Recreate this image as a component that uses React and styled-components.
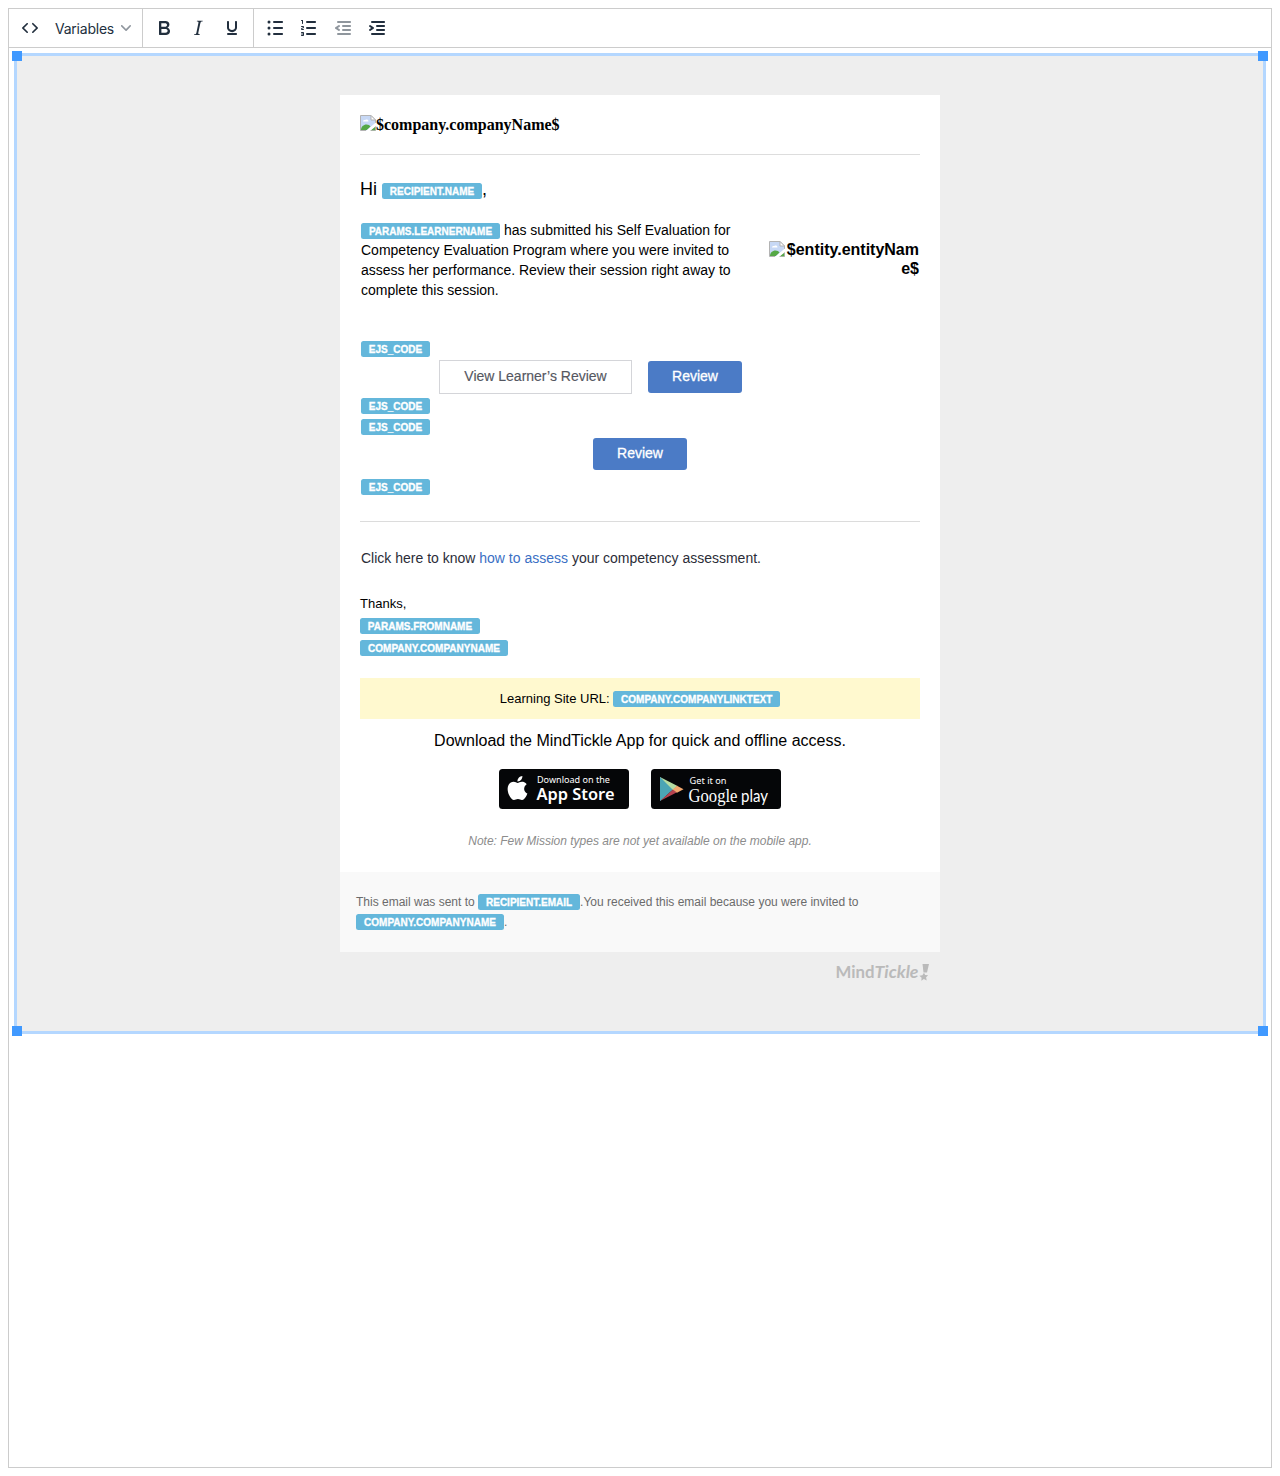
import React from "react";
import styled, { createGlobalStyle } from "styled-components";

const GlobalStyle = createGlobalStyle`
  *, *::before, *::after { box-sizing: border-box; }
  body { margin: 0; background: #fff; }
`;

const Editor = styled.main`
  display: flex;
  flex-direction: column;
  margin: 8px;
  height: 1460px;
  border: 1px solid #ccc;
  font-family: "Liberation Sans", Arial, sans-serif;
  color: #000;
`;

const Toolbar = styled.div`
  display: flex;
  flex: none;
  height: 39px;
  border-bottom: 1px solid #ccc;
`;

const ToolGroup = styled.div`
  display: flex;
  padding: 2px 4px 0;
  & + & { border-left: 1px solid #ccc; }
`;

const ToolButton = styled.button`
  display: flex;
  align-items: center;
  justify-content: center;
  width: 34px;
  height: 34px;
  padding: 0;
  border: 0;
  background: none;
  color: #222f3e;
  opacity: ${(p) => (p.disabled ? 0.5 : 1)};
  svg { fill: currentColor; }
`;

const MenuButton = styled.button`
  display: flex;
  align-items: center;
  gap: 7px;
  width: 91px;
  height: 34px;
  padding: 2px 0 0 8px;
  border: 0;
  background: none;
  color: #222f3e;
  font: 400 14px/20px Inter, sans-serif;
  letter-spacing: -0.23px;
  white-space: nowrap;
  svg { flex: none; fill: #8f969e; margin-top: -2px; }
`;

const Selection = styled.section`
  position: relative;
  display: flex;
  flex-direction: column;
  align-items: center;
  margin: 5px 5px 0;
  height: 981px;
  padding-top: 39px;
  border: 3px solid #b4d7ff;
  background: #eee;
`;

const Handle = styled.i`
  position: absolute;
  width: 10px;
  height: 10px;
  background: #4099ff;
  ${(p) => p.$v}: -5px;
  ${(p) => p.$h}: -5px;
`;

const Card = styled.article`
  flex: none;
  width: 600px;
  height: 777px;
  padding: 0 20px;
  background: #fff;
`;

const CompanyLogo = styled.div`
  display: flex;
  height: 60px;
  padding-top: 20px;
  border-bottom: 1px solid #ddd;
  font: bold 16px/20px "Liberation Serif", "Times New Roman", serif;
`;

const Line = styled.div`
  display: flex;
  justify-content: ${(p) => (p.$center ? "center" : "flex-start")};
  height: ${(p) => p.$h || 20}px;
  margin-top: ${(p) => p.$mt || 0}px;
  padding-left: ${(p) => p.$pl || 0}px;
  font-size: ${(p) => p.$size || 14}px;
  line-height: ${(p) => p.$h || 20}px;
  font-style: ${(p) => (p.$italic ? "italic" : "normal")};
  color: ${(p) => p.$color || "inherit"};
  white-space: pre;
`;

const Tag = styled.span`
  flex: none;
  width: ${(p) => p.$w}px;
  height: 16px;
  margin-top: ${(p) => p.$mt || 0}px;
  border-radius: 2.5px;
  background: #64b7db;
  color: #fff;
  -webkit-text-stroke: 0.3px #fff;
  text-align: center;
  font: bold 10px/17px "Liberation Sans", Arial, sans-serif;
  white-space: nowrap;
`;

const Intro = styled.div`
  display: flex;
  justify-content: space-between;
  height: 121px;
  margin-top: 16px;
`;

const EntityLogo = styled.div`
  display: flex;
  justify-content: flex-end;
  align-items: flex-start;
  gap: 2px;
  margin: 20px 1px 0 0;
  text-align: right;
  font: bold 16px/19px "Liberation Sans", Arial, sans-serif;
  svg { margin-top: 1px; }
`;

const Actions = styled.div`
  display: flex;
  align-items: center;
  gap: 16px;
  height: 34px;
  margin-top: 3px;
  padding-left: 79px;
`;

const Button = styled.a`
  display: block;
  flex: none;
  width: ${(p) => (p.$outline ? 193 : 94)}px;
  height: ${(p) => (p.$outline ? 34 : 32)}px;
  border: ${(p) => (p.$outline ? "1px solid #d4d5d9" : "0")};
  border-radius: ${(p) => (p.$outline ? 0 : 3)}px;
  background: ${(p) => (p.$outline ? "#fff" : "#4b7bc6")};
  color: ${(p) => (p.$outline ? "#555761" : "#fff")};
  -webkit-text-stroke: ${(p) => (p.$outline ? "0.15px #555761" : "0.3px #fff")};
  text-align: center;
  font-size: 14px;
  line-height: 31px;
`;

const CenteredAction = styled.div`
  display: flex;
  justify-content: center;
  margin: 3px 0 9px;
`;

const Divider = styled.hr`
  height: 1px;
  margin: 26px 0 0;
  border: 0;
  background: #dcdcdc;
`;

const Link = styled.a`
  color: #3a6fc4;
`;

const SiteBar = styled.div`
  height: 41px;
  margin-top: 22px;
  padding-top: 11px;
  background: #fff9cf;
`;

const Stores = styled.div`
  display: flex;
  justify-content: center;
  gap: 22px;
  height: 40px;
  margin-top: 18px;
`;

const Footer = styled.footer`
  flex: none;
  width: 600px;
  height: 80px;
  padding: 20px 16px;
  background: #f9f9f9;
`;

const BrandRow = styled.div`
  display: flex;
  justify-content: flex-end;
  width: 600px;
  padding: 10px 10px 0 0;
`;

const TOOL_ICONS = {
  code: "M9.8 15.7c.3.3.3.8 0 1-.3.4-.9.4-1.2 0l-4.4-4.1a.8.8 0 0 1 0-1.2l4.4-4.2c.3-.3.9-.3 1.2 0 .3.3.3.8 0 1.1L6 12l3.8 3.7zM14.2 15.7c-.3.3-.3.8 0 1 .4.4.9.4 1.2 0l4.4-4.1c.3-.3.3-.9 0-1.2l-4.4-4.2a.8.8 0 0 0-1.2 0c-.3.3-.3.8 0 1.1L18 12l-3.8 3.7z",
  bold: "M7.8 19c-.3 0-.5 0-.6-.2l-.2-.5V5.7c0-.2 0-.4.2-.5l.6-.2h5c1.5 0 2.7.3 3.5 1 .7.6 1.1 1.4 1.1 2.5a3 3 0 0 1-.6 1.9c-.4.6-1 1-1.6 1.2.4.1.9.3 1.3.6s.8.7 1 1.2c.4.4.5 1 .5 1.6 0 1.3-.4 2.3-1.3 3-.8.7-2.1 1-3.8 1H7.8zm5-8.3c.6 0 1.2-.1 1.6-.5.4-.3.6-.7.6-1.3 0-1.1-.8-1.7-2.3-1.7H9.3v3.5h3.4zm.5 6c.7 0 1.3-.1 1.7-.4.4-.4.6-.9.6-1.5s-.2-1-.7-1.4c-.4-.3-1-.4-2-.4H9.4v3.8h4z",
  italic: "M16.7 4.7l-.1.9h-.3c-.6 0-1 0-1.4.3-.3.3-.4.6-.5 1.1l-2.1 9.8v.6c0 .5.4.8 1.4.8h.2l-.2.8H8l.2-.8h.2c1.1 0 1.8-.5 2-1.5l2-9.8.1-.5c0-.6-.4-.8-1.4-.8h-.3l.2-.9h5.8z",
  underline: "M16 5c.6 0 1 .4 1 1v5.5a4 4 0 0 1-.4 1.8l-1 1.4a5.3 5.3 0 0 1-5.5 1 5 5 0 0 1-1.6-1c-.5-.4-.8-.9-1.1-1.4a4 4 0 0 1-.4-1.8V6c0-.6.4-1 1-1s1 .4 1 1v5.5c0 .3 0 .6.2 1l.6.7a3.3 3.3 0 0 0 2.2.8 3.4 3.4 0 0 0 2.2-.8c.3-.2.4-.5.6-.8l.2-.9V6c0-.6.4-1 1-1zM8 17h8c.6 0 1 .4 1 1s-.4 1-1 1H8a1 1 0 0 1 0-2z",
  bullets: "M11 5h8c.6 0 1 .4 1 1s-.4 1-1 1h-8a1 1 0 0 1 0-2zm0 6h8c.6 0 1 .4 1 1s-.4 1-1 1h-8a1 1 0 0 1 0-2zm0 6h8c.6 0 1 .4 1 1s-.4 1-1 1h-8a1 1 0 0 1 0-2zM6 4.5a1.5 1.5 0 1 1 0 3 1.5 1.5 0 0 1 0-3zm0 6a1.5 1.5 0 1 1 0 3 1.5 1.5 0 0 1 0-3zm0 6a1.5 1.5 0 1 1 0 3 1.5 1.5 0 0 1 0-3z",
  numbers: "M10 17h8c.6 0 1 .4 1 1s-.4 1-1 1h-8a1 1 0 0 1 0-2zm0-6h8c.6 0 1 .4 1 1s-.4 1-1 1h-8a1 1 0 0 1 0-2zm0-6h8c.6 0 1 .4 1 1s-.4 1-1 1h-8a1 1 0 1 1 0-2zM6 4v3.5c0 .3-.2.5-.5.5a.5.5 0 0 1-.5-.5V5h-.5a.5.5 0 0 1 0-1H6zm-1 8.8l.2.2h1.3c.3 0 .5.2.5.5s-.2.5-.5.5H4.9a1 1 0 0 1-.9-1V13c0-.4.3-.8.6-1l1.2-.4.2-.3a.2.2 0 0 0-.2-.2H4.5a.5.5 0 0 1-.5-.5c0-.3.2-.5.5-.5h1.6c.5 0 .9.4.9 1v.1c0 .4-.3.8-.6 1l-1.2.4-.2.3zM7 17v2c0 .6-.4 1-1 1H4.5a.5.5 0 0 1 0-1h1.2c.2 0 .3-.1.3-.3 0-.2-.1-.3-.3-.3H4.4a.4.4 0 1 1 0-.8h1.3c.2 0 .3-.1.3-.3 0-.2-.1-.3-.3-.3H4.5a.5.5 0 1 1 0-1H6c.6 0 1 .4 1 1z",
  outdent: "M7 5h12c.6 0 1 .4 1 1s-.4 1-1 1H7a1 1 0 1 1 0-2zm5 4h7c.6 0 1 .4 1 1s-.4 1-1 1h-7a1 1 0 0 1 0-2zm0 4h7c.6 0 1 .4 1 1s-.4 1-1 1h-7a1 1 0 0 1 0-2zm-5 4h12a1 1 0 0 1 0 2H7a1 1 0 0 1 0-2zm1.6-3.8a1 1 0 0 1-1.2 1.6l-3-2a1 1 0 0 1 0-1.6l3-2a1 1 0 0 1 1.2 1.6L6.8 12l1.8 1.2z",
  indent: "M7 5h12c.6 0 1 .4 1 1s-.4 1-1 1H7a1 1 0 1 1 0-2zm5 4h7c.6 0 1 .4 1 1s-.4 1-1 1h-7a1 1 0 0 1 0-2zm0 4h7c.6 0 1 .4 1 1s-.4 1-1 1h-7a1 1 0 0 1 0-2zm-5 4h12a1 1 0 0 1 0 2H7a1 1 0 0 1 0-2zm-2.6-3.8L6.2 12l-1.8-1.2a1 1 0 0 1 1.2-1.6l3 2a1 1 0 0 1 0 1.6l-3 2a1 1 0 1 1-1.2-1.6z",
};

const Tool = ({ name, disabled }) => (
  <ToolButton aria-label={name} disabled={disabled}>
    <svg width="24" height="24" fillRule="evenodd">
      <path d={TOOL_ICONS[name]} />
    </svg>
  </ToolButton>
);

const BrokenImage = () => (
  <svg width="16" height="16" viewBox="0 0 16 16">
    <path d="M.5.5H11l4.500 4.500v3L7 15.500H.5z" fill="#c7d8f5" />
    <path d="M1 14.800c0-3 2.500-5.300 5.500-5.300 1.800 0 3.200.8 4 1.900L6.800 15H1z" fill="#55a846" />
    <path d="M3 6.500a1.500 1.500 0 0 1 2-1.400 2 2 0 0 1 3.500 1.400z" fill="#fff" />
    <path d="M15.500 8V5L11 .5H.5v15H6" fill="none" stroke="#b3b3b3" />
    <path d="M11 .5V5h4.500z" fill="#fff" stroke="#b3b3b3" />
    <path d="M15.500 11v4.500H10z" fill="#55a846" stroke="#a5a5a5" strokeWidth=".7" />
    <path d="M16 7.500 6 16h4l6-5z" fill="#fff" />
  </svg>
);

const AppStoreBadge = () => (
  <svg width="130" height="40" viewBox="0 0 130 40" fill="#fff">
    <rect width="130" height="40" rx="3.500" fill="#050608" />
    <g transform="translate(3.900 4.600) scale(1.220 1.200)">
      <path d="M18.710 19.500c-.83 1.240-1.710 2.450-3.050 2.470-1.340.03-1.770-.79-3.290-.79-1.530 0-2 .77-3.270.82-1.310.05-2.300-1.320-3.140-2.530C4.250 17 2.940 12.450 4.700 9.390c.87-1.520 2.430-2.480 4.120-2.510 1.280-.02 2.500.87 3.290.87.780 0 2.260-1.070 3.810-.91.650.03 2.470.26 3.640 1.980-.09.060-2.170 1.280-2.150 3.810.03 3.020 2.650 4.030 2.680 4.040-.03.070-.42 1.440-1.380 2.830M13 3.500c.73-.83 1.940-1.460 2.940-1.500.13 1.170-.34 2.350-1.040 3.190-.69.850-1.830 1.510-2.950 1.420-.15-1.150.41-2.350 1.050-3.110z" />
    </g>
    <text x="38" y="13.800" fontFamily="'Noto Sans', sans-serif" fontSize="9" textLength="73" lengthAdjust="spacingAndGlyphs">Download on the</text>
    <text x="37.500" y="31" fontFamily="'Noto Sans', sans-serif" fontWeight="600" fontSize="16" textLength="78" lengthAdjust="spacingAndGlyphs">App Store</text>
  </svg>
);

const GooglePlayBadge = () => (
  <svg width="130" height="40" viewBox="0 0 130 40" fill="#fff">
    <rect width="130" height="40" rx="3.500" fill="#050608" />
    <path d="M9 8v24l13-11.700z" fill="#6cc4c6" />
    <path d="M9 8v24l13-11.700-6-5.800z" fill="#4ba5b5" />
    <path d="M9 8l17.500 9-4.500 4z" fill="#b5dca2" />
    <path d="M9 32l13-11.500 4 2.800z" fill="#b5434f" />
    <path d="M26 16.800 32.500 20.300 26 23.800 21.700 20.500z" fill="#f3a86f" />
    <text x="38.500" y="14.800" fontFamily="'Noto Sans', sans-serif" fontSize="9" textLength="37" lengthAdjust="spacingAndGlyphs">Get it on</text>
    <text x="37.500" y="32.500" fontFamily="'Liberation Serif', serif" fontSize="18.500" textLength="49" lengthAdjust="spacingAndGlyphs">Google</text>
    <text x="90" y="32.500" fontFamily="Lato, sans-serif" fontWeight="400" fontSize="16.500" textLength="27" lengthAdjust="spacingAndGlyphs">play</text>
  </svg>
);

const MindTickleLogo = () => (
  <svg width="95" height="22" viewBox="0 0 95 22" fill="#bababa" fontFamily="Lato, sans-serif" fontWeight="700" fontSize="17.500">
    <text x="0.500" y="16" textLength="39" lengthAdjust="spacingAndGlyphs">Mind</text>
    <text x="39.500" y="16" fontStyle="italic" textLength="44" lengthAdjust="spacingAndGlyphs">Tickle</text>
    <path d="M87.500 2h6.500l-2 8.500h-3.500z" />
    <path d="M89 10.800l1.100 2.300 3 .1-2 2 .6 3.200-2.800-1.400-2.600 1.700.3-3-2.200-1.900 3-.6z" />
  </svg>
);

export default function App() {
  return (
    <>
      <GlobalStyle />
      <Editor>
        <Toolbar>
          <ToolGroup>
            <Tool name="code" />
            <MenuButton>
              Variables
              <svg width="10" height="10">
                <path d="M8.700 2.200c.3-.3.8-.3 1 0 .4.4.4.9 0 1.200L5.700 7.800c-.3.3-.9.3-1.200 0L.2 3.400a.8.8 0 0 1 0-1.200c.3-.3.8-.3 1.100 0L5 6l3.700-3.800z" />
              </svg>
            </MenuButton>
          </ToolGroup>
          <ToolGroup>
            <Tool name="bold" />
            <Tool name="italic" />
            <Tool name="underline" />
          </ToolGroup>
          <ToolGroup>
            <Tool name="bullets" />
            <Tool name="numbers" />
            <Tool name="outdent" disabled />
            <Tool name="indent" />
          </ToolGroup>
        </Toolbar>
        <Selection>
          <Handle $v="top" $h="left" />
          <Handle $v="top" $h="right" />
          <Handle $v="bottom" $h="left" />
          <Handle $v="bottom" $h="right" />
          <Card>
            <CompanyLogo><BrokenImage />$company.companyName$</CompanyLogo>
            <Line $mt={19} $h={30} $size={18}>
              {"Hi "}<Tag $w={100} $mt={9}>RECIPIENT.NAME</Tag>,
            </Line>
            <Intro>
              <div>
                <Line $pl={1}><Tag $w={139} $mt={3}>PARAMS.LEARNERNAME</Tag>{" has submitted his Self Evaluation for"}</Line>
                <Line $pl={1}>Competency Evaluation Program where you were invited to</Line>
                <Line $pl={1}>assess her performance. Review their session right away to</Line>
                <Line $pl={1}>complete this session.</Line>
              </div>
              <EntityLogo><BrokenImage /><span>$entity.entityNam<br />e$</span></EntityLogo>
            </Intro>
            <Line $pl={1} $h={16}><Tag $w={69}>EJS_CODE</Tag></Line>
            <Actions>
              <Button $outline>View Learner’s Review</Button>
              <Button>Review</Button>
            </Actions>
            <Line $pl={1} $h={16} $mt={4}><Tag $w={69}>EJS_CODE</Tag></Line>
            <Line $pl={1} $h={16} $mt={5}><Tag $w={69}>EJS_CODE</Tag></Line>
            <CenteredAction><Button>Review</Button></CenteredAction>
            <Line $pl={1} $h={16}><Tag $w={69}>EJS_CODE</Tag></Line>
            <Divider />
            <Line $pl={1} $mt={26} $color="#2b2d38">
              {"Click here to know "}<Link>how to assess</Link>{" your competency assessment."}
            </Line>
            <Line $mt={26} $size={13}>Thanks,</Line>
            <Line $h={16} $mt={4}><Tag $w={120}>PARAMS.FROMNAME</Tag></Line>
            <Line $h={16} $mt={6}><Tag $w={148}>COMPANY.COMPANYNAME</Tag></Line>
            <SiteBar>
              <Line $center $size={13}>{"Learning Site URL: "}<Tag $w={167} $mt={2}>COMPANY.COMPANYLINKTEXT</Tag></Line>
            </SiteBar>
            <Line $center $size={16} $h={20} $mt={12}>Download the MindTickle App for quick and offline access.</Line>
            <Stores><AppStoreBadge /><GooglePlayBadge /></Stores>
            <Line $center $size={12} $mt={22} $italic $color="#8c8c8c">Note: Few Mission types are not yet available on the mobile app.</Line>
          </Card>
          <Footer>
            <Line $size={12} $color="#6b6b6b">{"This email was sent to "}<Tag $w={102} $mt={2}>RECIPIENT.EMAIL</Tag>.You received this email because you were invited to</Line>
            <Line $size={12} $color="#6b6b6b"><Tag $w={148} $mt={2}>COMPANY.COMPANYNAME</Tag>.</Line>
          </Footer>
          <BrandRow><MindTickleLogo /></BrandRow>
        </Selection>
      </Editor>
    </>
  );
}
